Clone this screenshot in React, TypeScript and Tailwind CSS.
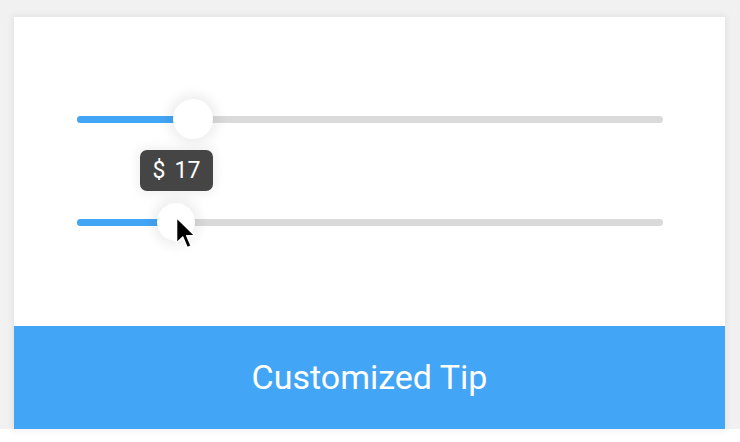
import React from "react";

function Slider({ value, thumbSize }: { value: number; thumbSize: number }) {
  return (
    <div className="relative h-10 flex items-center">
      <div className="relative w-full h-[7px] rounded-full bg-[#dadada]">
        <div className="absolute left-0 top-0 h-full rounded-full bg-[#42a5f5]" style={{ width: value }} />
      </div>
      <div
        className="absolute top-1/2 -translate-x-1/2 -translate-y-1/2 rounded-full bg-white shadow-[0_0_12px_5px_rgba(0,0,0,0.07)]"
        style={{ left: value, width: thumbSize, height: thumbSize }}
      />
    </div>
  );
}

export default function App() {
  return (
    <div className="w-[740px] h-[442px] bg-white overflow-hidden" style={{ fontFamily: "Roboto, 'Noto Sans', sans-serif" }}>
      <div className="w-full h-[429px] bg-[#f1f1f1] pt-[17px] pl-[14px] pr-[15px]">
        <div className="relative h-[412px] flex flex-col bg-white shadow-[0_0_6px_2px_rgba(0,0,0,0.06)]">
          <div className="flex-1 flex flex-col pt-[82px] pl-[63px] pr-[62px] gap-[63px]">
            <Slider value={116} thumbSize={40} />
            <Slider value={99} thumbSize={38} />
          </div>
          <div className="absolute left-[126px] top-[133px] w-[73px] h-[41px] rounded-[7px] bg-[#454545] flex items-center justify-center gap-[9px] text-white text-[23px] leading-none shadow-[0_0_10px_4px_rgba(0,0,0,0.05)]">
            <span>$</span>
            <span>17</span>
          </div>
          <svg className="absolute left-[161px] top-[199px]" width="22" height="34" viewBox="0 0 22 34">
            <path d="M1.5 1.5 L1.5 27 L7.8 21.2 L12.2 31.8 L16.2 30 L11.8 19.8 L20 19.8 Z" fill="#000" stroke="#fff" strokeWidth="1.6" strokeLinejoin="round" />
          </svg>
          <div className="h-[103px] bg-[#42a5f5] flex items-center justify-center text-white text-[34px]">
            Customized Tip
          </div>
        </div>
      </div>
    </div>
  );
}
